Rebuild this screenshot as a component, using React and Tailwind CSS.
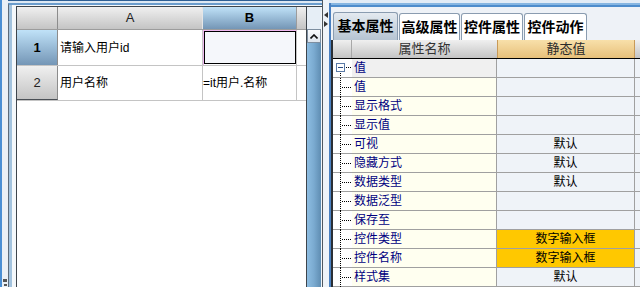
import React from 'react';

const props = [
  { name: '值', value: '', group: true },
  { name: '值', value: '' },
  { name: '显示格式', value: '' },
  { name: '显示值', value: '' },
  { name: '可视', value: '默认' },
  { name: '隐藏方式', value: '默认' },
  { name: '数据类型', value: '默认' },
  { name: '数据泛型', value: '' },
  { name: '保存至', value: '' },
  { name: '控件类型', value: '数字输入框', hl: true },
  { name: '控件名称', value: '数字输入框', hl: true },
  { name: '样式集', value: '默认' },
];

const tabs = [
  { label: '基本属性', w: 'w-[65px] h-[28px]', active: true },
  { label: '高级属性', w: 'w-[61px] h-[27px]' },
  { label: '控件属性', w: 'w-[62px] h-[27px]' },
  { label: '控件动作', w: 'w-[63px] h-[27px]' },
];

const hdrGray = 'bg-linear-to-b from-[#f0f0f0] to-[#c4c4c4]';
const hdrBlue = 'bg-linear-to-b from-[#c0e2f8] to-[#7496b6]';
const dotV = 'w-px bg-[repeating-linear-gradient(to_bottom,#000_0_1px,transparent_1px_2px)]';
const dotH = 'h-px bg-[repeating-linear-gradient(to_right,#000_0_1px,transparent_1px_2px)]';

const SheetGrid = () => (
  <div className="w-[290px] flex flex-col bg-white border-r border-[#3e454c]">
    <div className="flex h-[23px] border-b border-[#9c9c9c]">
      <div className={`w-[41px] border-r border-[#8c8c8c] ${hdrGray}`} />
      <div className={`w-[145px] border-r border-[#e6e6e6] ${hdrGray} flex items-center justify-center text-[13px] text-[#222]`}>A</div>
      <div className={`w-[94px] border-r border-[#9c9c9c] ${hdrBlue} flex items-center justify-center text-[13px] font-bold text-black`}>B</div>
      <div className={`flex-1 ${hdrGray}`} />
    </div>
    <div className="flex h-[36px] border-b border-[#c4c4c4]">
      <div className={`w-[41px] border-r border-[#8c8c8c] ${hdrBlue} flex items-center justify-center text-[13px] font-bold`}>1</div>
      <div className="w-[145px] border-r border-[#c4c4c4] flex items-center pl-[2px] text-[12px] text-black">请输入用户id</div>
      <div className="w-[94px] border-r border-[#c4c4c4] border-t border-l border-t-[#f0b8f0] border-l-[#f0b8f0] flex">
        <div className="flex-1 border border-black bg-[#f5f7fb] mb-px" />
      </div>
      <div className="flex-1" />
    </div>
    <div className="flex h-[35px] border-b border-[#c4c4c4]">
      <div className={`w-[41px] border-r border-[#8c8c8c] border-b border-b-[#4a4f55] ${hdrGray} flex items-center justify-center text-[13px] text-[#222]`}>2</div>
      <div className="w-[145px] border-r border-[#c4c4c4] flex items-center pl-[2px] text-[12px] text-black">用户名称</div>
      <div className="w-[94px] border-r border-[#c4c4c4] flex items-center text-[12px] text-black">=it用户.名称</div>
      <div className="flex-1" />
    </div>
    <div className="flex-1" />
  </div>
);

const VScroll = () => (
  <div className="w-[14px] flex flex-col">
    <div className="h-[22px] bg-[#e6eef6]" />
    <div className="h-[14px] border border-[#7d8ea0] bg-linear-to-b from-[#fafcfe] to-[#dfe6ee] flex items-center justify-center">
      <svg width="8" height="5" viewBox="0 0 8 5">
        <polyline points="0.5,4.5 4,1 7.5,4.5" fill="none" stroke="#111" strokeWidth="1.6" />
      </svg>
    </div>
    <div className="flex-1 bg-linear-to-r from-[#8dbde2] via-[#7aaad0] to-[#5f8db2]" />
  </div>
);

const TreeCell = ({ first }) => (
  <div className="w-[19px] relative bg-white">
    {first ? (
      <>
        <div className="absolute left-[3px] top-[4px] w-[9px] h-[9px] border border-[#5a7aa6] bg-white flex items-center justify-center">
          <div className="w-[5px] h-px bg-[#2a4a80]" />
        </div>
        <div className={`absolute left-[13px] top-[8px] w-[6px] ${dotH}`} />
        <div className={`absolute left-[7px] top-[14px] bottom-0 ${dotV}`} />
      </>
    ) : (
      <>
        <div className={`absolute left-[7px] top-0 bottom-[-1px] ${dotV}`} />
        <div className={`absolute left-[9px] top-[9px] w-[10px] ${dotH}`} />
      </>
    )}
  </div>
);

const PropGrid = () => (
  <div className="flex-1 flex flex-col border-l-2 border-[#2a2f35]">
    <div className="flex h-[19px] border-b border-black">
      <div className={`w-[19px] border-r border-[#a8a8a8] ${hdrGray}`} />
      <div className={`w-[145px] ${hdrGray} flex items-center justify-center text-[13px] text-[#333]`}>属性名称</div>
      <div className="w-[138px] border-x border-[#c89a58] bg-linear-to-b from-[#f8e0aa] to-[#e7c07a] flex items-center justify-center text-[13px] text-[#2a2a2a]">静态值</div>
      <div className={`flex-1 ${hdrGray}`} />
    </div>
    {props.map((p, i) => (
      <div key={i} className="flex h-[19px] border-b border-[#a0a0a0]">
        <TreeCell first={i === 0} />
        <div className={`w-[145px] border-r border-[#a0a0a0] pl-[2px] flex items-center text-[12px] text-[#000080] ${p.group ? 'bg-[#f0f0f0]' : 'bg-[#fffff0]'}`}>{p.name}</div>
        <div className={`w-[138px] border-r border-[#a0a0a0] flex items-center justify-center text-[12px] text-black ${p.hl ? 'bg-[#ffc800]' : 'bg-[#eff3f8]'}`}>{p.value}</div>
        <div className="flex-1 bg-[#eff3f8]" />
      </div>
    ))}
  </div>
);

export default function App() {
  return (
    <div className="w-[640px] h-[287px] overflow-hidden flex bg-[#eef2f7] font-['Liberation_Sans','Noto_Sans_CJK_SC',sans-serif]">
      {/* left edge */}
      <div className="w-[2px] bg-[#4a8fd4]" />
      <div className="w-[6px] bg-[#eaf0f6] flex flex-col justify-end items-center pb-[1px] gap-[2px]">
        <div className="w-[4px] h-[3px] bg-[#555]" />
        <div className="w-[3px] h-[2px] bg-[#555]" />
      </div>

      {/* sheet panel */}
      <div className="w-[314px] flex flex-col border-t border-[#2e5f94] bg-[#dde8f3] pt-[2px]">
        <div className="flex-1 flex flex-col border-t-2 border-[#6a9ccc] border-l border-l-[#5b6b7b]">
          <div className="flex-1 flex border-l-[3px] border-[#a3c3de]">
            <div className="flex-1 flex flex-col bg-[#f4f8fb] pl-[4px] pt-px">
              <div className="flex-1 flex border-t border-l border-[#3e454c]">
                <SheetGrid />
                <VScroll />
              </div>
            </div>
          </div>
        </div>
      </div>

      {/* splitter */}
      <div className="w-px bg-[#50585f]" />
      <div className="w-[6px] flex flex-col items-center pt-[12px] gap-[3px] bg-[#eef3f8]">
        <svg width="4" height="6" viewBox="0 0 4 6"><polygon points="4,0 0,3 4,6" fill="#333" /></svg>
        <svg width="4" height="6" viewBox="0 0 4 6"><polygon points="0,0 4,3 0,6" fill="#333" /></svg>
      </div>
      <div className="w-[2px] flex flex-col">
        <div className="h-[3px] bg-[#e2ecf6]" />
        <div className="flex-1 bg-[#4a80c0]" />
      </div>

      {/* property panel */}
      <div className="w-[309px] flex flex-col">
        <div className="h-[3px] bg-[#e2ecf6]" />
        <div className="h-[2px] bg-[#86b6e2]" />
        <div className="h-[2px] bg-[#4d8ccc]" />
        <div className="h-[33px] flex items-end pl-[2px] gap-px">
          {tabs.map((t) => (
            <div
              key={t.label}
              className={`${t.w} rounded-t-[3px] border border-b-0 border-[#8a9cb0] flex items-center justify-center text-[14px] font-bold text-black ${t.active ? 'bg-linear-to-b from-[#e4eaf0] to-[#b6c4d2]' : 'bg-white'}`}
            >
              {t.label}
            </div>
          ))}
        </div>
        <PropGrid />
      </div>
    </div>
  );
}
